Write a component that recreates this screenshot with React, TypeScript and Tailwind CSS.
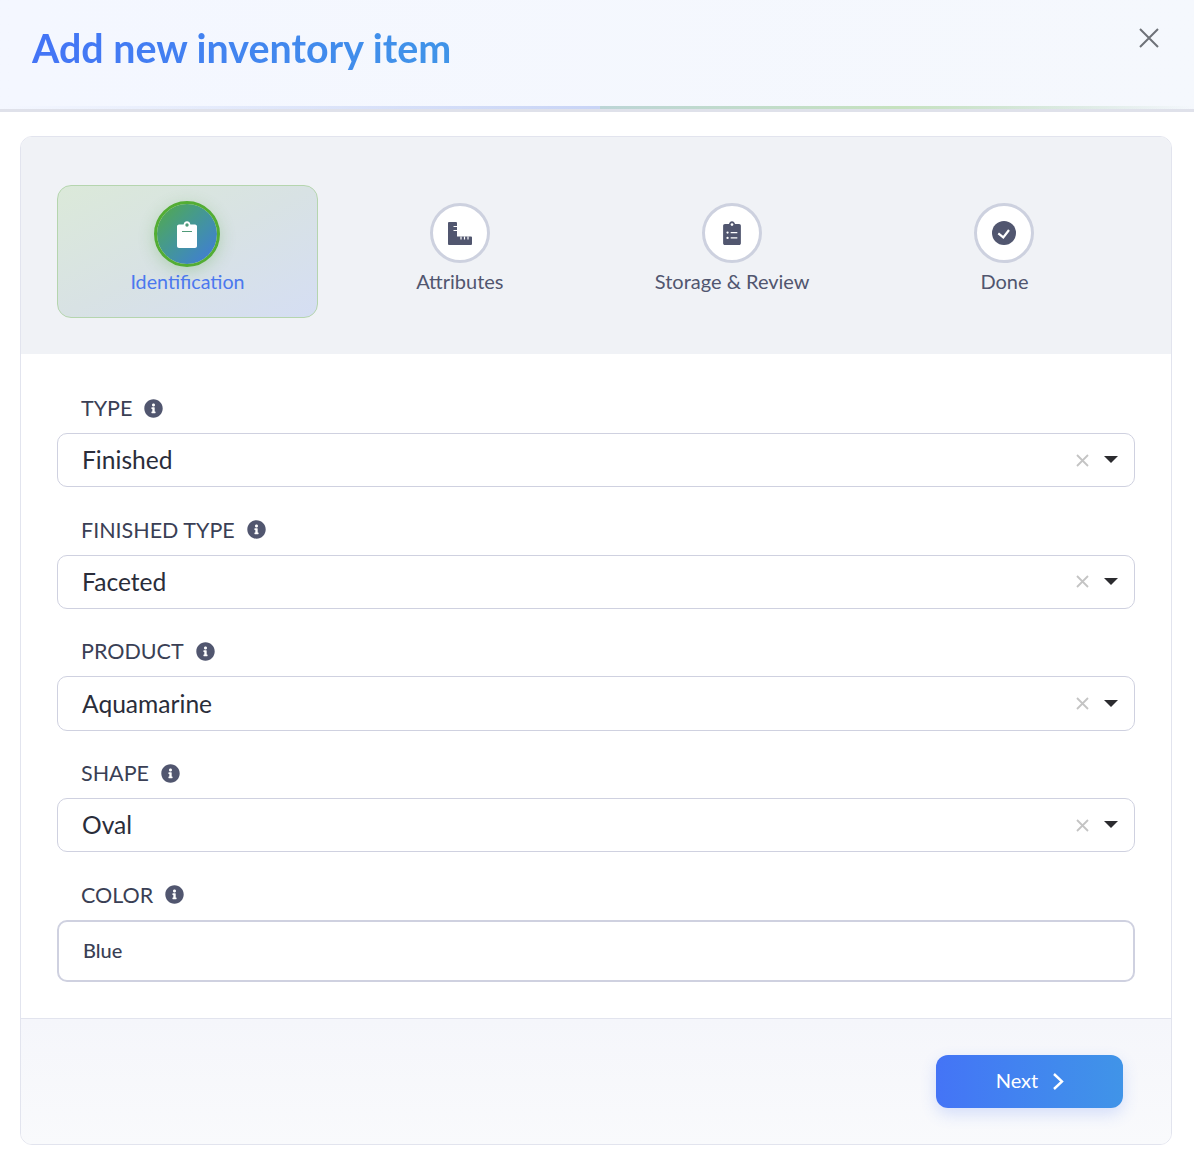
import React from 'react';
import { FaInfoCircle } from 'react-icons/fa';

const fields = [
  { label: 'TYPE', value: 'Finished' },
  { label: 'FINISHED TYPE', value: 'Faceted' },
  { label: 'PRODUCT', value: 'Aquamarine' },
  { label: 'SHAPE', value: 'Oval' },
];

const clipboardPath =
  'M2 3.5h4.6C7 1.5 8.3.3 10 .3s3 1.2 3.4 3.2H18c1.1 0 2 .9 2 2V25c0 1.1-.9 2-2 2H2c-1.1 0-2-.9-2-2V5.500c0-1.100.9-2 2-2z';

function ClipboardIcon() {
  return (
    <svg width="20" height="27" viewBox="0 0 20 27">
      <path d={clipboardPath} fill="#fff" />
      <circle cx="10" cy="4" r="1.700" fill="#4f9a78" />
      <rect x="5" y="10" width="10" height="1" fill="#4f9a78" />
    </svg>
  );
}

function RulerIcon() {
  return (
    <svg width="24" height="23" viewBox="0 0 24 23" className="ml-[1px]">
      <path d="M1 0h7a1 1 0 0 1 1 1v13.500h14a1 1 0 0 1 1 1V22a1 1 0 0 1-1 1H1a1 1 0 0 1-1-1V1a1 1 0 0 1 1-1z" fill="#51566f" />
      <path d="M5.500 4.500H9M5.500 8.500H9M13 14.500v3M16.500 14.500v3M20 14.500v3" stroke="#fff" strokeWidth="1.200" />
    </svg>
  );
}

function ListIcon() {
  return (
    <svg width="18" height="24" viewBox="0 0 20 27">
      <path d={clipboardPath} fill="#51566f" />
      <circle cx="10" cy="4" r="1.500" fill="#fff" />
      <circle cx="5" cy="13" r="1.300" fill="#fff" />
      <circle cx="5" cy="19" r="1.300" fill="#fff" />
      <path d="M8.500 13H16M8.500 19H16" stroke="#fff" strokeWidth="1.500" />
    </svg>
  );
}

function CheckIcon() {
  return (
    <svg width="24" height="24" viewBox="0 0 24 24">
      <circle cx="12" cy="12" r="12" fill="#51566f" />
      <path d="M6.300 12.400l5 4L17 9" fill="none" stroke="#fff" strokeWidth="2.200" />
    </svg>
  );
}

function Label({ text }: { text: string }) {
  return (
    <div className="flex h-[24px] items-center gap-[12px] pl-[24px] text-[21.500px] leading-[24px] text-[#3a3f55]">
      <span>{text}</span>
      <FaInfoCircle className="text-[19px] text-[#51566f]" />
    </div>
  );
}

function SelectField({ label, value }: { label: string; value: string }) {
  return (
    <div className="flex h-[121.700px] flex-col">
      <Label text={label} />
      <div className="mt-[13px] flex h-[54.300px] items-center rounded-[10px] border border-[#cfd1e0] bg-white pl-[24px] pr-[16px]">
        <span className="mt-[1px] flex-1 text-[24.600px] text-[#2a2d3a]">{value}</span>
        <svg width="13" height="13" viewBox="0 0 13 13" className="mr-[15px]">
          <path d="M1 1l11 11M12 1L1 12" stroke="#c4c4c4" strokeWidth="1.800" />
        </svg>
        <svg width="14" height="7" viewBox="0 0 14 7" className="mb-[1px]">
          <path d="M0 0h14L7 7z" fill="#2b2b2f" />
        </svg>
      </div>
    </div>
  );
}

function Step({ label, children }: { label: string; children: React.ReactNode }) {
  return (
    <div className="flex h-[133px] flex-col items-center pt-[18px]">
      <div className="flex h-[60px] w-[60px] items-center justify-center rounded-full border-[3px] border-[#cdd1df] bg-white">
        {children}
      </div>
      <div className="mt-[6px] text-[20px] leading-[24px] text-[#51566f]">{label}</div>
    </div>
  );
}

export default function App() {
  return (
    <div className="h-[1176px] w-[1194px] bg-white font-['Lato',sans-serif]">
      <div className="relative h-[112px] border-b-[3px] border-[#dfe1ea] bg-gradient-to-r from-[#f4f7ff] to-[#f5f8fd] pl-[32px] pr-[35px]">
        <div className="flex items-start justify-between pt-[22px]">
          <h1 className="bg-gradient-to-r from-[#4474f6] to-[#4094e8] bg-clip-text text-[39.400px] font-bold leading-[52px] text-transparent">
            Add new inventory item
          </h1>
          <svg width="20" height="20" viewBox="0 0 20 20" className="mt-[6px]">
            <path d="M1 1l18 18M19 1L1 19" stroke="#6e7278" strokeWidth="2" />
          </svg>
        </div>
        <div className="absolute inset-x-0 bottom-0 h-[3px] bg-gradient-to-r from-transparent via-[#c8d4f6] to-transparent" />
        <div className="absolute bottom-0 left-[600px] right-0 h-[3px] bg-gradient-to-r from-[#bcd5d6] via-[#c6e2bf] to-transparent" />
      </div>

      <div className="ml-[20px] mr-[22px] mt-[24px] h-[1009px] overflow-hidden rounded-[12px] border border-[#e2e4ee]">
        <div className="grid h-[217px] grid-cols-4 gap-[11.300px] bg-[#f0f2f6] px-[36px] pt-[48px]">
          <div className="flex h-[133px] flex-col items-center rounded-[14px] border border-[#b5d5ae] bg-gradient-to-br from-[#dbe9d9] via-[#d8e2e4] to-[#d5def3] pt-[15px]">
            <div className="mr-[1px] flex h-[66px] w-[66px] items-center justify-center rounded-full border-[3.500px] border-[#53ad34] bg-gradient-to-br from-[#55aa38] to-[#4475de] bg-clip-padding shadow-[0_4px_16px_rgba(90,170,70,0.3)]">
              <ClipboardIcon />
            </div>
            <div className="mt-[3px] text-[19.700px] leading-[24px] text-[#4b78ee]">Identification</div>
          </div>
          <Step label="Attributes">
            <RulerIcon />
          </Step>
          <Step label="Storage & Review">
            <ListIcon />
          </Step>
          <Step label="Done">
            <CheckIcon />
          </Step>
        </div>

        <div className="h-[664px] bg-white px-[36px] pt-[42px]">
          {fields.map((f) => (
            <SelectField key={f.label} label={f.label} value={f.value} />
          ))}
          <Label text="COLOR" />
          <div className="mt-[13px] flex h-[62px] items-center rounded-[10px] border-2 border-[#cfd1e0] pb-[2px] pl-[24px] text-[20px] font-medium text-[#3a3f55]">
            Blue
          </div>
        </div>

        <div className="flex h-[126px] items-start justify-end border-t border-[#e2e4ee] bg-gradient-to-b from-[#f5f6fb] to-[#f9fafc] pr-[48px] pt-[36px]">
          <button className="flex h-[53px] w-[187px] items-center justify-center gap-[14px] rounded-[12px] bg-gradient-to-r from-[#4474f6] to-[#4094e8] text-[20px] text-white shadow-[0_6px_16px_rgba(68,116,246,0.2)]">
            <span className="mb-[3px] ml-[1px]">Next</span>
            <svg width="12" height="19" viewBox="0 0 12 19">
              <path d="M2 2l8 7.500-8 7.500" fill="none" stroke="#fff" strokeWidth="2.400" />
            </svg>
          </button>
        </div>
      </div>
    </div>
  );
}
